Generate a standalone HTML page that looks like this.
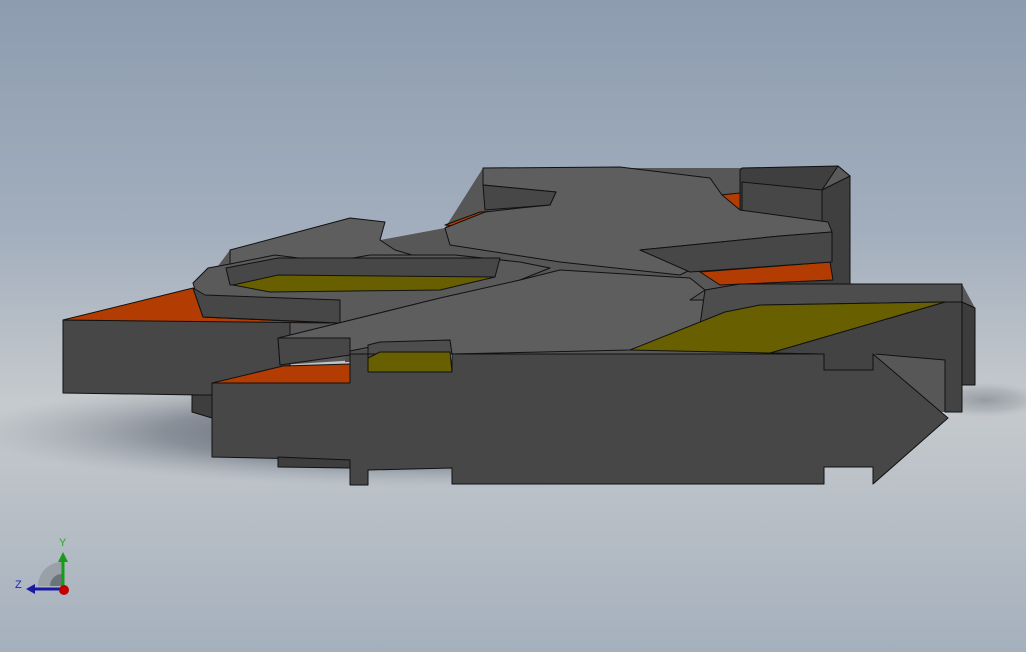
<!DOCTYPE html>
<html><head><meta charset="utf-8"><style>
html,body{margin:0;padding:0;width:1026px;height:652px;overflow:hidden}
svg{display:block}
</style></head><body>
<svg width="1026" height="652" viewBox="0 0 1026 652" xmlns="http://www.w3.org/2000/svg">
<defs>
<linearGradient id="bg" x1="0" y1="0" x2="0" y2="1">
<stop offset="0" stop-color="#8d9cb0"/>
<stop offset="0.35" stop-color="#a2aebd"/>
<stop offset="0.62" stop-color="#c6cacd"/>
<stop offset="1" stop-color="#a5b0bd"/>
</linearGradient>
<radialGradient id="sh" cx="0.5" cy="0.5" r="0.5">
<stop offset="0" stop-color="#2e3542" stop-opacity="0.9"/>
<stop offset="0.6" stop-color="#505866" stop-opacity="0.5"/>
<stop offset="1" stop-color="#8a93a0" stop-opacity="0"/>
</radialGradient>
</defs>
<rect width="1026" height="652" fill="url(#bg)"/>
<ellipse cx="450" cy="432" rx="480" ry="55" fill="url(#sh)"/>
<ellipse cx="985" cy="400" rx="60" ry="18" fill="url(#sh)" opacity="0.35"/>
<g stroke="#111" stroke-width="1" stroke-linejoin="round">
<polygon points="200,290 230,250 350,218 385,222 380,240 445,228 483,168 740,168 850,176 850,284 962,284 975,308 975,385 962,385 962,412 875,412 870,354 450,354 280,365 278,338 200,320" fill="#575757" stroke="none"/>
<polygon points="770,353 945,302 962,302 962,412 945,412 945,360 875,354 824,354" fill="#434343"/>
<rect x="818" y="350" width="58" height="24" fill="#434343" stroke="none"/>
<rect x="345" y="350" width="30" height="12" fill="#4d4d4d" stroke="none"/>
<polygon points="962,302 975,308 975,385 962,385" fill="#3c3c3c"/>
<polygon points="740,170 742,168 838,166 850,176 850,285 740,285" fill="#3f3f3f"/>
<polygon points="742,182 822,190 822,235 742,228" fill="#474747"/>
<polygon points="838,166 850,176 822,190" fill="#5a5a5a"/>
<polygon points="445,225 480,212 520,210 500,230" fill="#b23c02"/>
<polygon points="720,195 740,193 740,210" fill="#b23c02"/>
<polygon points="700,272 830,262 833,280 720,285" fill="#b23c02"/>
<polygon points="483,168 620,167 710,178 722,195 740,210 828,222 832,232 780,236 640,250 690,270 680,275 560,262 450,245 445,228 485,212 520,208 550,205 556,192 483,185" fill="#5e5e5e"/>
<polygon points="483,185 556,192 550,205 485,210" fill="#474747"/>
<polygon points="640,250 780,236 832,232 832,262 690,272" fill="#474747"/>
<polygon points="63,320 63,393 200,395 290,395 290,322" fill="#474747"/>
<polygon points="192,395 212,395 212,418 192,412" fill="#3e3e3e"/>
<polygon points="63,320 193,288 203,317 330,323" fill="#b23c02"/>
<polygon points="230,250 350,218 385,222 380,240 395,250 412,255 412,270 230,272" fill="#5e5e5e"/>
<polygon points="193,283 208,268 230,264 275,255 330,262 370,255 455,255 520,262 550,268 520,280 450,300 380,320 340,323 203,317" fill="#5a5a5a"/>
<polygon points="193,288 203,317 340,323 340,300 205,295" fill="#474747"/>
<polygon points="226,268 278,258 500,258 495,277 230,285" fill="#474747"/>
<polygon points="233,285 278,275 495,277 440,290 270,292" fill="#686000"/>
<polygon points="278,338 440,298 520,280 560,270 690,278 705,290 690,300 715,300 725,315 700,325 630,350 450,354 380,345 280,365" fill="#5e5e5e"/>
<polygon points="278,338 280,365 350,355 350,338" fill="#474747"/>
<polygon points="705,290 740,284 962,284 962,302 945,302 760,305 720,318 700,325" fill="#4d4d4d"/>
<polygon points="630,350 725,312 760,305 945,302 770,353" fill="#686000"/>
<polygon points="350,354 368,354 368,345 380,342 450,340 452,354" fill="#4d4d4d"/>
<polygon points="368,358 380,352 450,352 452,372 368,372" fill="#686000"/>
<polygon points="212,383 283,366 350,364 350,383" fill="#b23c02"/>
<polygon points="212,383 350,383 350,354 368,354 368,372 452,372 452,354 824,354 824,370 873,370 873,354 948,418 873,484 873,467 824,467 824,484 452,484 452,468 368,470 368,485 350,485 350,460 212,457" fill="#474747"/>
<polygon points="278,457 350,460 350,468 278,467" fill="#3e3e3e"/>
</g>
<path d="M62,562 A24,24 0 0 0 38,586 L62,586 Z" fill="#9aa0a8"/>
<path d="M62,574 A12,12 0 0 0 50,586 L62,586 Z" fill="#6d737b"/>
<line x1="63" y1="590" x2="63" y2="560" stroke="#1a9a1a" stroke-width="3"/>
<polygon points="58,562 68,562 63,552" fill="#1a9a1a"/>
<line x1="63" y1="589" x2="34" y2="589" stroke="#1a1aa0" stroke-width="3"/>
<polygon points="35,584 35,594 26,589" fill="#1a1aa0"/>
<circle cx="64" cy="590" r="5" fill="#c00000"/>
<text x="59" y="546" font-family="Liberation Sans,sans-serif" font-size="11" fill="#20b020">Y</text>
<text x="15" y="588" font-family="Liberation Sans,sans-serif" font-size="11" fill="#2020c0">Z</text>
</svg>
</body></html>
